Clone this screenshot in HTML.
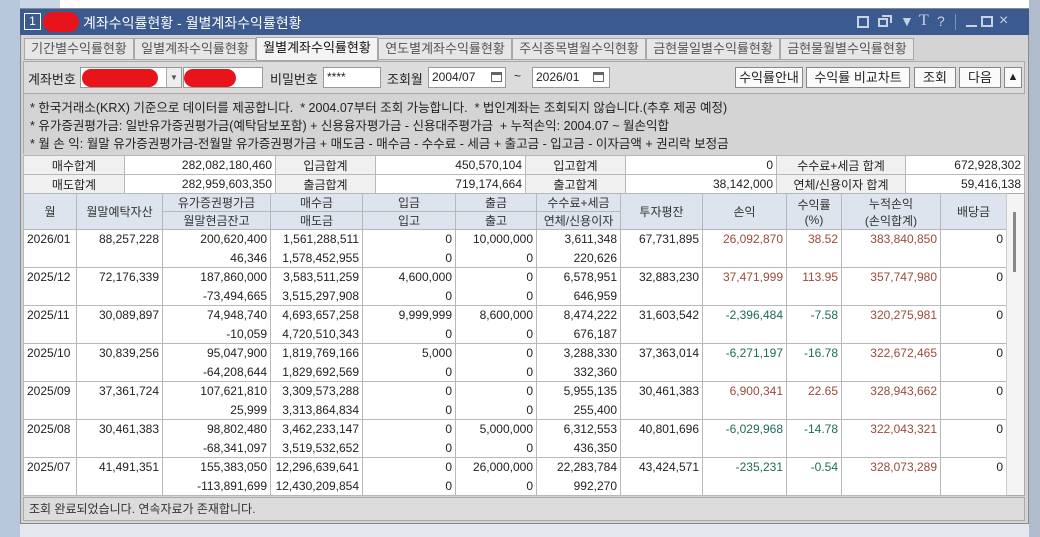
<!DOCTYPE html>
<html><head><meta charset="utf-8">
<style>
*{margin:0;padding:0;box-sizing:border-box}
body{width:1040px;height:537px;overflow:hidden;background:#c9d6e6;font-family:"Liberation Sans","Noto Sans CJK KR",sans-serif;font-size:12px;color:#222;position:relative}
.abs{position:absolute}
.win{left:20px;top:8px;width:1009px;height:516px;background:#d4d4d4;border:1px solid #8a8a8a}
.title{left:20px;top:9px;width:1009px;height:26px;background:#3b5a8f;color:#fff;font-size:14px}
.tab{top:38px;height:22px;border:1px solid #a8a8a8;background:#e6e6e6;color:#555;font-size:13px;line-height:20px;text-align:center}
.inp{background:#fff;border:1px solid #999;height:21px;line-height:19px;padding-left:3px}
.btn{top:67px;height:21px;border:1px solid #888;background:#fafafa;text-align:center;line-height:19px;font-size:13px}
table{border-collapse:collapse;table-layout:fixed}
td{border:1px solid #b8b8b8;height:19px;padding:0 3px;white-space:nowrap;overflow:hidden}
.r{text-align:right}.c{text-align:center}
.lb{background:#f0f0f0;text-align:center}
.hd td{background:#dde4ee;text-align:center;height:18px;color:#333}
.p{color:#9a4a3c}.n{color:#1f6a5a}
.data td{border-top:none;border-bottom:none}
.data tr.a td{border-top:1px solid #b8b8b8}
.ic{position:absolute;top:4px;color:#c8d2e4;font-size:14px;line-height:16px;white-space:nowrap}
</style></head><body>
<div class="abs" style="left:0;top:0;width:20px;height:537px;background:#b8c8dc"></div>
<div class="abs" style="left:60px;top:0;width:980px;height:9px;background:#fff;border-bottom:1px solid #999"></div>
<div class="abs win"></div>
<div class="abs title">
 <div class="abs" style="left:4px;top:4px;width:17px;height:17px;border:1px solid #fff;font-size:12px;line-height:15px;text-align:center">1</div>
 <div class="abs" style="left:23px;top:3px;width:36px;height:20px;background:#e8141c;border-radius:10px"></div>
 <div class="abs" style="left:63px;top:4px">계좌수익률현황 - 월별계좌수익률현황</div>
 <div class="abs" style="left:837px;top:7px;width:12px;height:12px;border:2px solid #c8d2e4"></div>
 <div class="abs" style="left:858px;top:9px;width:10px;height:9px;border:2px solid #c8d2e4"></div>
 <div class="abs" style="left:862px;top:6px;width:10px;height:8px;border:2px solid #c8d2e4;border-left:none;border-bottom:none"></div>
 <div class="ic" style="left:880px">▼</div>
 <div class="ic" style="left:899px;font-family:'Liberation Serif',serif;font-size:16px">T</div>
 <div class="ic" style="left:917px">?</div>
 <div class="abs" style="left:935px;top:5px;width:1px;height:16px;background:#7f93b8"></div>
 <div class="abs" style="left:946px;top:16px;width:11px;height:2px;background:#c8d2e4"></div>
 <div class="abs" style="left:961px;top:7px;width:12px;height:11px;border:2px solid #c8d2e4"></div>
 <div class="ic" style="left:979px;font-size:16px">×</div>
</div>
<div class="abs tab" style="left:24px;width:110px">기간별수익률현황</div>
<div class="abs tab" style="left:134px;width:122px">일별계좌수익률현황</div>
<div class="abs tab" style="left:256px;width:122px;background:#f4f4f4;color:#111;top:37px;height:24px">월별계좌수익률현황</div>
<div class="abs tab" style="left:378px;width:134px">연도별계좌수익률현황</div>
<div class="abs tab" style="left:512px;width:134px">주식종목별월수익현황</div>
<div class="abs tab" style="left:646px;width:134px">금현물일별수익률현황</div>
<div class="abs tab" style="left:780px;width:134px">금현물월별수익률현황</div>
<div class="abs" style="left:23px;top:61px;width:1002px;height:93px;border:1px solid #aaa;background:#dcdcdc"></div>
<div class="abs" style="left:28px;top:69px;font-size:13px">계좌번호</div>
<div class="abs inp" style="left:80px;top:67px;width:102px"></div>
<div class="abs" style="left:82px;top:69px;width:76px;height:18px;background:#e8141c;border-radius:9px"></div>
<div class="abs" style="left:166px;top:68px;width:15px;height:19px;border-left:1px solid #aaa;background:#eee;font-size:8px;text-align:center;line-height:19px;color:#555">▼</div>
<div class="abs inp" style="left:183px;top:67px;width:80px"></div>
<div class="abs" style="left:184px;top:69px;width:52px;height:18px;background:#e8141c;border-radius:9px"></div>
<div class="abs" style="left:270px;top:69px;font-size:13px">비밀번호</div>
<div class="abs inp" style="left:323px;top:67px;width:58px">****</div>
<div class="abs" style="left:387px;top:69px;font-size:13px">조회월</div>
<div class="abs inp" style="left:428px;top:67px;width:78px">2004/07</div>
<div class="abs" style="left:514px;top:69px">~</div>
<div class="abs inp" style="left:532px;top:67px;width:78px">2026/01</div>
<div class="abs" style="left:491px;top:72px;width:11px;height:10px;border:1px solid #666;border-top-width:3px"></div>
<div class="abs" style="left:593px;top:72px;width:11px;height:10px;border:1px solid #666;border-top-width:3px"></div>
<div class="abs btn" style="left:735px;width:68px">수익률안내</div>
<div class="abs btn" style="left:806px;width:104px">수익률 비교차트</div>
<div class="abs btn" style="left:914px;width:42px">조회</div>
<div class="abs btn" style="left:959px;width:42px">다음</div>
<div class="abs btn" style="left:1004px;width:18px;font-size:11px">▲</div>
<div class="abs" style="left:24px;top:93px;width:1001px;height:61px;border-top:1px solid #aaa;background:#d4d4d4;font-size:12.5px;line-height:18px;padding:5px 0 0 6px;color:#222">
* 한국거래소(KRX) 기준으로 데이터를 제공합니다. &nbsp;* 2004.07부터 조회 가능합니다. &nbsp;* 법인계좌는 조회되지 않습니다.(추후 제공 예정)<br>
* 유가증권평가금: 일반유가증권평가금(예탁담보포함) + 신용융자평가금 - 신용대주평가금 &nbsp;+ 누적손익: 2004.07 ~ 월손익합<br>
* 월 손 익: 월말 유가증권평가금-전월말 유가증권평가금 + 매도금 - 매수금 - 수수료 - 세금 + 출고금 - 입고금 - 이자금액 + 권리락 보정금
</div>
<table class="abs" style="left:23px;top:155px;width:1001px;background:#fff">
<colgroup><col style="width:101px"><col style="width:151px"><col style="width:100px"><col style="width:150px"><col style="width:100px"><col style="width:151px"><col style="width:129px"><col style="width:119px"></colgroup>
<tr><td class="lb">매수합계</td><td class="r">282,082,180,460</td><td class="lb">입금합계</td><td class="r">450,570,104</td><td class="lb">입고합계</td><td class="r">0</td><td class="lb">수수료+세금 합계</td><td class="r">672,928,302</td></tr>
<tr><td class="lb">매도합계</td><td class="r">282,959,603,350</td><td class="lb">출금합계</td><td class="r">719,174,664</td><td class="lb">출고합계</td><td class="r">38,142,000</td><td class="lb">연체/신용이자 합계</td><td class="r">59,416,138</td></tr>
</table>
<div class="abs" style="left:23px;top:193px;width:1002px;height:303px;background:#fff;border:1px solid #aaa"></div>
<table class="abs data" style="left:23px;top:193px;width:983px;background:#fff">
<colgroup><col style="width:53px"><col style="width:86px"><col style="width:108px"><col style="width:92px"><col style="width:93px"><col style="width:81px"><col style="width:84px"><col style="width:82px"><col style="width:84px"><col style="width:55px"><col style="width:99px"><col style="width:66px"></colgroup>
<tr class="hd a"><td rowspan="2">월</td><td rowspan="2">월말예탁자산</td><td>유가증권평가금</td><td>매수금</td><td>입금</td><td>출금</td><td>수수료+세금</td><td rowspan="2">투자평잔</td><td rowspan="2">손익</td><td rowspan="2">수익률<br>(%)</td><td rowspan="2">누적손익<br>(손익합계)</td><td rowspan="2">배당금</td></tr>
<tr class="hd"><td style="border-top:1px solid #b8b8b8">월말현금잔고</td><td style="border-top:1px solid #b8b8b8">매도금</td><td style="border-top:1px solid #b8b8b8">입고</td><td style="border-top:1px solid #b8b8b8">출고</td><td style="border-top:1px solid #b8b8b8">연체/신용이자</td></tr>
<tr class="a"><td>2026/01</td><td class="r">88,257,228</td><td class="r">200,620,400</td><td class="r">1,561,288,511</td><td class="r">0</td><td class="r">10,000,000</td><td class="r">3,611,348</td><td class="r">67,731,895</td><td class="r p">26,092,870</td><td class="r p">38.52</td><td class="r p">383,840,850</td><td class="r">0</td></tr>
<tr><td></td><td></td><td class="r">46,346</td><td class="r">1,578,452,955</td><td class="r">0</td><td class="r">0</td><td class="r">220,626</td><td></td><td></td><td></td><td></td><td></td></tr>
<tr class="a"><td>2025/12</td><td class="r">72,176,339</td><td class="r">187,860,000</td><td class="r">3,583,511,259</td><td class="r">4,600,000</td><td class="r">0</td><td class="r">6,578,951</td><td class="r">32,883,230</td><td class="r p">37,471,999</td><td class="r p">113.95</td><td class="r p">357,747,980</td><td class="r">0</td></tr>
<tr><td></td><td></td><td class="r">-73,494,665</td><td class="r">3,515,297,908</td><td class="r">0</td><td class="r">0</td><td class="r">646,959</td><td></td><td></td><td></td><td></td><td></td></tr>
<tr class="a"><td>2025/11</td><td class="r">30,089,897</td><td class="r">74,948,740</td><td class="r">4,693,657,258</td><td class="r">9,999,999</td><td class="r">8,600,000</td><td class="r">8,474,222</td><td class="r">31,603,542</td><td class="r n">-2,396,484</td><td class="r n">-7.58</td><td class="r p">320,275,981</td><td class="r">0</td></tr>
<tr><td></td><td></td><td class="r">-10,059</td><td class="r">4,720,510,343</td><td class="r">0</td><td class="r">0</td><td class="r">676,187</td><td></td><td></td><td></td><td></td><td></td></tr>
<tr class="a"><td>2025/10</td><td class="r">30,839,256</td><td class="r">95,047,900</td><td class="r">1,819,769,166</td><td class="r">5,000</td><td class="r">0</td><td class="r">3,288,330</td><td class="r">37,363,014</td><td class="r n">-6,271,197</td><td class="r n">-16.78</td><td class="r p">322,672,465</td><td class="r">0</td></tr>
<tr><td></td><td></td><td class="r">-64,208,644</td><td class="r">1,829,692,569</td><td class="r">0</td><td class="r">0</td><td class="r">332,360</td><td></td><td></td><td></td><td></td><td></td></tr>
<tr class="a"><td>2025/09</td><td class="r">37,361,724</td><td class="r">107,621,810</td><td class="r">3,309,573,288</td><td class="r">0</td><td class="r">0</td><td class="r">5,955,135</td><td class="r">30,461,383</td><td class="r p">6,900,341</td><td class="r p">22.65</td><td class="r p">328,943,662</td><td class="r">0</td></tr>
<tr><td></td><td></td><td class="r">25,999</td><td class="r">3,313,864,834</td><td class="r">0</td><td class="r">0</td><td class="r">255,400</td><td></td><td></td><td></td><td></td><td></td></tr>
<tr class="a"><td>2025/08</td><td class="r">30,461,383</td><td class="r">98,802,480</td><td class="r">3,462,233,147</td><td class="r">0</td><td class="r">5,000,000</td><td class="r">6,312,553</td><td class="r">40,801,696</td><td class="r n">-6,029,968</td><td class="r n">-14.78</td><td class="r p">322,043,321</td><td class="r">0</td></tr>
<tr><td></td><td></td><td class="r">-68,341,097</td><td class="r">3,519,532,652</td><td class="r">0</td><td class="r">0</td><td class="r">436,350</td><td></td><td></td><td></td><td></td><td></td></tr>
<tr class="a"><td>2025/07</td><td class="r">41,491,351</td><td class="r">155,383,050</td><td class="r">12,296,639,641</td><td class="r">0</td><td class="r">26,000,000</td><td class="r">22,283,784</td><td class="r">43,424,571</td><td class="r n">-235,231</td><td class="r n">-0.54</td><td class="r p">328,073,289</td><td class="r">0</td></tr>
<tr style="border-bottom:1px solid #b8b8b8"><td></td><td></td><td class="r">-113,891,699</td><td class="r">12,430,209,854</td><td class="r">0</td><td class="r">0</td><td class="r">992,270</td><td></td><td></td><td></td><td></td><td></td></tr>
</table>
<div class="abs" style="left:1006px;top:194px;width:18px;height:301px;background:#f4f4f4;border-left:1px solid #ccc"></div>
<div class="abs" style="left:1013px;top:212px;width:3px;height:60px;background:#888"></div>
<div class="abs" style="left:23px;top:497px;width:1002px;height:24px;background:#dcdcdc;border:1px solid #aaa;line-height:22px;padding-left:5px;color:#333">조회 완료되었습니다. 연속자료가 존재합니다.</div>
<div class="abs" style="left:20px;top:524px;width:1020px;height:13px;background:#e4e8ee"></div>
<div class="abs" style="left:1029px;top:0;width:11px;height:537px;background:#b0bccb"></div>
</body></html>
